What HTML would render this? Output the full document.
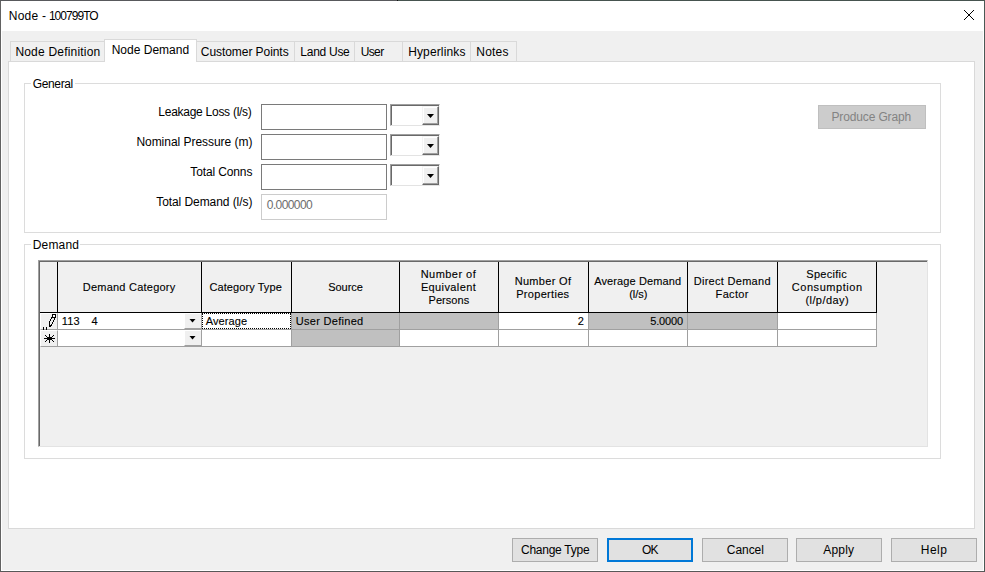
<!DOCTYPE html>
<html><head><meta charset="utf-8"><title>Node - 100799TO</title>
<style>
*{box-sizing:border-box;margin:0;padding:0}
html,body{width:985px;height:572px;overflow:hidden;background:#f0f0f0}
body{font-family:"Liberation Sans",sans-serif;font-size:12px;color:#000;position:relative}
.a{position:absolute}
.t{position:absolute;white-space:nowrap;line-height:14px}
.tab{position:absolute;top:41px;height:20px;border:1px solid #d9d9d9;border-bottom:none;background:#f0f0f0}
.inp{position:absolute;left:261px;width:126px;height:26px;background:#fff;border:1px solid #7a7a7a}
.btn{position:absolute;top:538px;height:24px;background:#e1e1e1;border:1px solid #adadad}
.hc{position:absolute;top:262px;height:51px;background:#f0f0f0;border-right:1px solid #000;border-bottom:1px solid #000}
.c{position:absolute;height:17px;background:#fff;border-right:1px solid #a0a0a0;border-bottom:1px solid #a0a0a0}
.g{background:#c0c0c0}
.cb{position:absolute;left:390px;width:50px;height:22px;background:#fff;border-top:1px solid #a0a0a0;border-left:1px solid #a0a0a0;border-right:1px solid #f4f4f4;border-bottom:1px solid #e3e3e3}
.cb i{position:absolute;left:0;top:0;width:48px;height:20px;border-top:1px solid #696969;border-left:1px solid #696969}
.cb b{position:absolute;left:31px;top:1px;width:17px;height:19px;background:#f0f0f0;border-top:1px solid #f4f4f4;border-left:1px solid #f4f4f4;border-right:1px solid #696969;border-bottom:1px solid #696969;box-shadow:inset -1px -1px 0 #a0a0a0,inset 1px 1px 0 #fff}
.cb svg{position:absolute;left:36px;top:9px}
.rh{position:absolute;left:40px;width:18px;height:17px;background:#f0f0f0;border-right:1px solid #a0a0a0;border-bottom:1px solid #a0a0a0;border-left:1px solid #fff;border-top:1px solid #fff}
.dd{position:absolute;left:184px;width:17px;height:16px;background:#f0f0f0;border-left:1px solid #fff;border-top:1px solid #fff;border-bottom:1px solid #a0a0a0}
.dd svg{position:absolute;left:4px;top:5px}
</style></head><body>
<div class="a" style="left:0;top:0;width:985px;height:572px;border:1px solid #46544f;border-left-color:#626262;border-bottom-color:#585858;border-right-color:#4a5955"></div>
<div class="a" style="left:0;top:0;width:397px;height:1px;background:#58595c"></div>
<div class="a" style="left:397px;top:0;width:1px;height:1px;background:#111"></div>
<div class="a" style="left:1px;top:1px;width:983px;height:570px;border:1px solid #fff"></div>
<div class="a" style="left:1px;top:1px;width:983px;height:30px;background:#fff"></div>
<svg class="a" style="left:963px;top:9px" width="12" height="12" viewBox="0 0 12 12"><path d="M1 1L11 11M11 1L1 11" stroke="#000" stroke-width="1" fill="none"/></svg>
<div class="a" style="left:8px;top:61px;width:967px;height:468px;background:#fff;border:1px solid #d9d9d9"></div>
<div class="tab" style="left:10px;width:95px"></div>
<div class="tab" style="left:196px;width:99px"></div>
<div class="tab" style="left:294px;width:61px"></div>
<div class="tab" style="left:354px;width:49px"></div>
<div class="tab" style="left:402px;width:69px"></div>
<div class="tab" style="left:470px;width:47px"></div>
<div class="tab" style="left:104px;top:39px;width:93px;height:23px;background:#fff"></div>
<div class="a" style="left:24px;top:83px;width:917px;height:150px;border:1px solid #dcdcdc"></div>
<div class="a" style="left:31px;top:83px;width:44px;height:1px;background:#fff"></div>
<div class="a" style="left:24px;top:244px;width:917px;height:215px;border:1px solid #dcdcdc"></div>
<div class="a" style="left:31px;top:244px;width:49px;height:1px;background:#fff"></div>
<div class="inp" style="top:104px"></div>
<div class="inp" style="top:134px"></div>
<div class="inp" style="top:164px"></div>
<div class="inp" style="top:194px;border-color:#cccccc"></div>
<div class="cb" style="top:104px"><i></i><b></b><svg width="7" height="4" viewBox="0 0 7 4"><path d="M0 0H7L3.5 4Z" fill="#000"/></svg></div>
<div class="cb" style="top:134px"><i></i><b></b><svg width="7" height="4" viewBox="0 0 7 4"><path d="M0 0H7L3.5 4Z" fill="#000"/></svg></div>
<div class="cb" style="top:164px"><i></i><b></b><svg width="7" height="4" viewBox="0 0 7 4"><path d="M0 0H7L3.5 4Z" fill="#000"/></svg></div>
<div class="a" style="left:818px;top:105px;width:108px;height:24px;background:#cccccc;border:1px solid #bfbfbf"></div>
<div class="a" style="left:38px;top:260px;width:890px;height:187px;background:#f0f0f0;border-top:1px solid #a0a0a0;border-left:1px solid #a0a0a0;border-right:1px solid #e3e3e3;border-bottom:1px solid #e3e3e3"></div>
<div class="a" style="left:39px;top:261px;width:888px;height:185px;border-top:1px solid #696969;border-left:1px solid #696969"></div>
<div class="hc" style="left:40px;width:18px"></div>
<div class="hc" style="left:58px;width:144px"></div>
<div class="hc" style="left:202px;width:90px"></div>
<div class="hc" style="left:292px;width:108px"></div>
<div class="hc" style="left:400px;width:99px"></div>
<div class="hc" style="left:499px;width:90px"></div>
<div class="hc" style="left:589px;width:99px"></div>
<div class="hc" style="left:688px;width:90px"></div>
<div class="hc" style="left:778px;width:99px"></div>
<div class="rh" style="top:313px"></div>
<div class="c" style="left:58px;top:313px;width:144px"></div>
<div class="c" style="left:202px;top:313px;width:90px"></div>
<div class="c g" style="left:292px;top:313px;width:108px"></div>
<div class="c g" style="left:400px;top:313px;width:99px"></div>
<div class="c" style="left:499px;top:313px;width:90px"></div>
<div class="c g" style="left:589px;top:313px;width:99px"></div>
<div class="c g" style="left:688px;top:313px;width:90px"></div>
<div class="c" style="left:778px;top:313px;width:99px"></div>
<div class="dd" style="top:313px"><svg width="7" height="4" viewBox="0 0 7 4"><path d="M0.5 0H6.5L3.5 3.5Z" fill="#000"/></svg></div>
<div class="rh" style="top:330px"></div>
<div class="c" style="left:58px;top:330px;width:144px"></div>
<div class="c" style="left:202px;top:330px;width:90px"></div>
<div class="c g" style="left:292px;top:330px;width:108px"></div>
<div class="c" style="left:400px;top:330px;width:99px"></div>
<div class="c" style="left:499px;top:330px;width:90px"></div>
<div class="c" style="left:589px;top:330px;width:99px"></div>
<div class="c" style="left:688px;top:330px;width:90px"></div>
<div class="c" style="left:778px;top:330px;width:99px"></div>
<div class="dd" style="top:330px"><svg width="7" height="4" viewBox="0 0 7 4"><path d="M0.5 0H6.5L3.5 3.5Z" fill="#000"/></svg></div>
<div class="a" style="left:202px;top:313px;width:89px;height:16px;border:1px dotted #000"></div>
<svg class="a" style="left:40px;top:313px" width="18" height="17" shape-rendering="crispEdges" fill="#000"><rect x="13" y="2" width="2" height="2" fill="#fff"/><rect x="12" y="1" width="4" height="1"/><rect x="12" y="2" width="1" height="2"/><rect x="15" y="2" width="1" height="2"/><rect x="11" y="4" width="5" height="1"/><rect x="11" y="5" width="1" height="1"/><rect x="14" y="5" width="1" height="2"/><rect x="10" y="6" width="1" height="2"/><rect x="13" y="7" width="1" height="2"/><rect x="9" y="8" width="1" height="6"/><rect x="12" y="9" width="1" height="2"/><rect x="11" y="11" width="1" height="2"/><rect x="10" y="12" width="1" height="2"/><rect x="3" y="14" width="1" height="3"/><rect x="6" y="14" width="1" height="3"/></svg>
<svg class="a" style="left:40px;top:330px" width="18" height="16" shape-rendering="crispEdges" fill="#000"><rect x="4" y="8" width="11" height="1"/><rect x="9" y="4" width="1" height="9"/><rect x="8" y="7" width="3" height="3"/><rect x="5" y="5" width="1" height="1"/><rect x="6" y="6" width="1" height="1"/><rect x="7" y="7" width="1" height="1"/><rect x="11" y="9" width="1" height="1"/><rect x="12" y="10" width="1" height="1"/><rect x="13" y="11" width="1" height="1"/><rect x="13" y="5" width="1" height="1"/><rect x="12" y="6" width="1" height="1"/><rect x="11" y="7" width="1" height="1"/><rect x="7" y="9" width="1" height="1"/><rect x="6" y="10" width="1" height="1"/><rect x="5" y="11" width="1" height="1"/></svg>
<div class="btn" style="left:512px;width:86px"></div>
<div class="btn" style="left:702px;width:86px"></div>
<div class="btn" style="left:796px;width:86px"></div>
<div class="btn" style="left:891px;width:86px"></div>
<div class="btn" style="left:607px;width:86px;border:2px solid #0078d7"></div>
<div class="t" id="ta" style="left:8.69px;top:9px;font-size:12px;letter-spacing:0.297px;">Node</div>
<div class="t" id="tb" style="left:41.99px;top:9px;font-size:12px;letter-spacing:0.000px;">-</div>
<div class="t" id="tc" style="left:48.90px;top:9px;font-size:12px;letter-spacing:-0.957px;">100799TO</div>
<div class="t" id="tab1" style="left:15.39px;top:45px;font-size:12px;letter-spacing:0.203px;">Node Definition</div>
<div class="t" id="tab2" style="left:111.71px;top:43px;font-size:12px;letter-spacing:0.002px;">Node Demand</div>
<div class="t" id="tab3" style="left:200.83px;top:45px;font-size:12px;letter-spacing:-0.064px;">Customer Points</div>
<div class="t" id="tab4" style="left:300.33px;top:45px;font-size:12px;letter-spacing:-0.274px;">Land Use</div>
<div class="t" id="tab5" style="left:360.75px;top:45px;font-size:12px;letter-spacing:-0.652px;">User</div>
<div class="t" id="tab6" style="left:408.13px;top:45px;font-size:12px;letter-spacing:0.144px;">Hyperlinks</div>
<div class="t" id="tab7" style="left:476.33px;top:45px;font-size:12px;letter-spacing:0.198px;">Notes</div>
<div class="t" id="gen" style="left:32.66px;top:77px;font-size:12px;letter-spacing:-0.345px;">General</div>
<div class="t" id="dem" style="left:32.74px;top:238px;font-size:12px;letter-spacing:0.178px;">Demand</div>
<div class="t" id="l1" style="left:158.34px;top:105px;font-size:12px;letter-spacing:-0.267px;">Leakage Loss (l/s)</div>
<div class="t" id="l2" style="left:136.40px;top:135px;font-size:12px;letter-spacing:-0.035px;">Nominal Pressure (m)</div>
<div class="t" id="l3" style="left:190.33px;top:165px;font-size:12px;letter-spacing:-0.132px;">Total Conns</div>
<div class="t" id="l4" style="left:156.23px;top:195px;font-size:12px;letter-spacing:-0.071px;">Total Demand (l/s)</div>
<div class="t" id="v4" style="left:266.83px;top:198px;font-size:12px;letter-spacing:-0.608px;color:#6d6d6d;">0.000000</div>
<div class="t" id="pg" style="left:831.40px;top:110px;font-size:12px;letter-spacing:-0.127px;color:#838383;">Produce Graph</div>
<div class="t" id="b1" style="left:520.97px;top:543px;font-size:12px;letter-spacing:-0.256px;">Change Type</div>
<div class="t" id="b2" style="left:642.01px;top:543px;font-size:12px;letter-spacing:-0.958px;">OK</div>
<div class="t" id="b3" style="left:726.83px;top:543px;font-size:12px;letter-spacing:-0.064px;">Cancel</div>
<div class="t" id="b4" style="left:823.19px;top:543px;font-size:12px;letter-spacing:0.218px;">Apply</div>
<div class="t" id="b5" style="left:920.73px;top:543px;font-size:12px;letter-spacing:0.504px;">Help</div>
<div class="t" id="h1" style="left:82.71px;top:280px;font-size:11px;letter-spacing:0.234px;-webkit-text-stroke:0.12px #000;">Demand Category</div>
<div class="t" id="h2" style="left:209.48px;top:280px;font-size:11px;letter-spacing:0.079px;-webkit-text-stroke:0.12px #000;">Category Type</div>
<div class="t" id="h3" style="left:328.13px;top:280px;font-size:11px;letter-spacing:0.001px;-webkit-text-stroke:0.12px #000;">Source</div>
<div class="t" id="h4a" style="left:420.70px;top:267px;font-size:11px;letter-spacing:0.457px;-webkit-text-stroke:0.12px #000;">Number of</div>
<div class="t" id="h4b" style="left:420.90px;top:280px;font-size:11px;letter-spacing:0.383px;-webkit-text-stroke:0.12px #000;">Equivalent</div>
<div class="t" id="h4c" style="left:428.62px;top:293px;font-size:11px;letter-spacing:0.029px;-webkit-text-stroke:0.12px #000;">Persons</div>
<div class="t" id="h5a" style="left:514.66px;top:273.5px;font-size:11px;letter-spacing:0.314px;-webkit-text-stroke:0.12px #000;">Number Of</div>
<div class="t" id="h5b" style="left:516.14px;top:286.5px;font-size:11px;letter-spacing:0.318px;-webkit-text-stroke:0.12px #000;">Properties</div>
<div class="t" id="h6a" style="left:594.13px;top:273.5px;font-size:11px;letter-spacing:0.129px;-webkit-text-stroke:0.12px #000;">Average Demand</div>
<div class="t" id="h6b" style="left:629.18px;top:286.5px;font-size:11px;letter-spacing:-0.040px;-webkit-text-stroke:0.12px #000;">(l/s)</div>
<div class="t" id="h7a" style="left:693.71px;top:273.5px;font-size:11px;letter-spacing:0.287px;-webkit-text-stroke:0.12px #000;">Direct Demand</div>
<div class="t" id="h7b" style="left:715.62px;top:286.5px;font-size:11px;letter-spacing:0.310px;-webkit-text-stroke:0.12px #000;">Factor</div>
<div class="t" id="h8a" style="left:806.33px;top:267px;font-size:11px;letter-spacing:0.263px;-webkit-text-stroke:0.12px #000;">Specific</div>
<div class="t" id="h8b" style="left:791.78px;top:280px;font-size:11px;letter-spacing:0.556px;-webkit-text-stroke:0.12px #000;">Consumption</div>
<div class="t" id="h8c" style="left:805.41px;top:293px;font-size:11px;letter-spacing:0.434px;-webkit-text-stroke:0.12px #000;">(l/p/day)</div>
<div class="t" id="c1" style="left:61.87px;top:314px;font-size:11px;letter-spacing:0.127px;-webkit-text-stroke:0.12px #000;">113</div>
<div class="t" id="c1b" style="left:91.54px;top:314px;font-size:11px;letter-spacing:0.000px;-webkit-text-stroke:0.12px #000;">4</div>
<div class="t" id="c2" style="left:205.85px;top:314px;font-size:11px;letter-spacing:0.071px;-webkit-text-stroke:0.12px #000;">Average</div>
<div class="t" id="c3" style="left:295.82px;top:314px;font-size:11px;letter-spacing:0.287px;-webkit-text-stroke:0.12px #000;">User Defined</div>
<div class="t" id="c5" style="left:577.83px;top:314px;font-size:11px;letter-spacing:0.000px;-webkit-text-stroke:0.12px #000;">2</div>
<div class="t" id="c6" style="left:650.16px;top:314px;font-size:11px;letter-spacing:-0.121px;-webkit-text-stroke:0.12px #000;">5.0000</div>
</body></html>
